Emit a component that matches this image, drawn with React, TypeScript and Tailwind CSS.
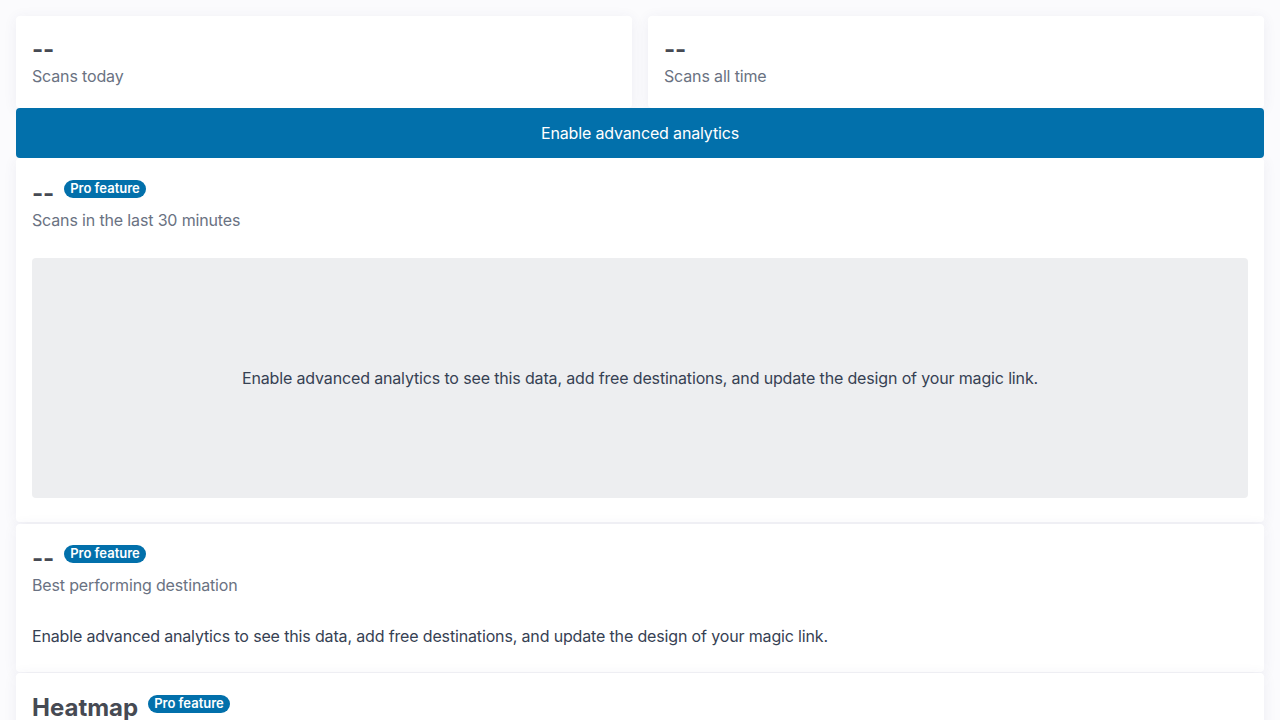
import React from 'react';

const font = { fontFamily: 'Inter, "Noto Sans", sans-serif' };

const ProBadge: React.FC = () => (
  <span className="inline-flex items-center h-[18px] px-[6px] rounded-full bg-[#0270ab] text-white text-[13px] font-semibold leading-none tracking-normal">
    Pro feature
  </span>
);

const Stat: React.FC<{ label: string; pro?: boolean }> = ({ label, pro }) => (
  <div>
    <div className="flex items-start gap-[10px] h-8">
      <span className="text-2xl leading-9 h-8 font-bold text-[#464a53]">--</span>
      {pro && (
        <span className="-mt-px">
          <ProBadge />
        </span>
      )}
    </div>
    <p className="text-base leading-6 text-gray-500">{label}</p>
  </div>
);

const card = 'bg-white rounded shadow-[0_2px_14px_rgba(60,60,120,0.07)]';

const App: React.FC = () => {
  return (
    <div className="min-h-screen bg-[#fbfbfd] p-4 tracking-[-0.15px]" style={font}>
      <div className="grid grid-cols-2 gap-4">
        <div className={`${card} px-4 pt-4 pb-5`}>
          <Stat label="Scans today" />
        </div>
        <div className={`${card} px-4 pt-4 pb-5`}>
          <Stat label="Scans all time" />
        </div>
      </div>

      <button
        type="button"
        className="w-full h-[50px] rounded bg-[#0270ab] text-white text-base"
      >
        Enable advanced analytics
      </button>

      <div className={`${card} px-4 pt-[18px] pb-6`}>
        <Stat label="Scans in the last 30 minutes" pro />
        <div className="mt-[26px] h-[240px] rounded bg-[#edeef0] flex items-center justify-center">
          <p className="text-base text-gray-700">
            Enable advanced analytics to see this data, add free destinations, and update the design of your magic link.
          </p>
        </div>
      </div>

      <div className={`${card} mt-[2px] px-4 pt-[17px] pb-6`}>
        <Stat label="Best performing destination" pro />
        <p className="mt-[27px] text-base leading-6 text-gray-700">
          Enable advanced analytics to see this data, add free destinations, and update the design of your magic link.
        </p>
      </div>

      <div className={`${card} mt-px px-4 pt-[17px] pb-6`}>
        <div className="flex items-start gap-[10px]">
          <h2 className="text-2xl leading-8 font-bold text-[#464a53] mt-[2px] tracking-normal">Heatmap</h2>
          <span>
            <ProBadge />
          </span>
        </div>
        <div className="h-40" />
      </div>
    </div>
  );
};

export default App;
